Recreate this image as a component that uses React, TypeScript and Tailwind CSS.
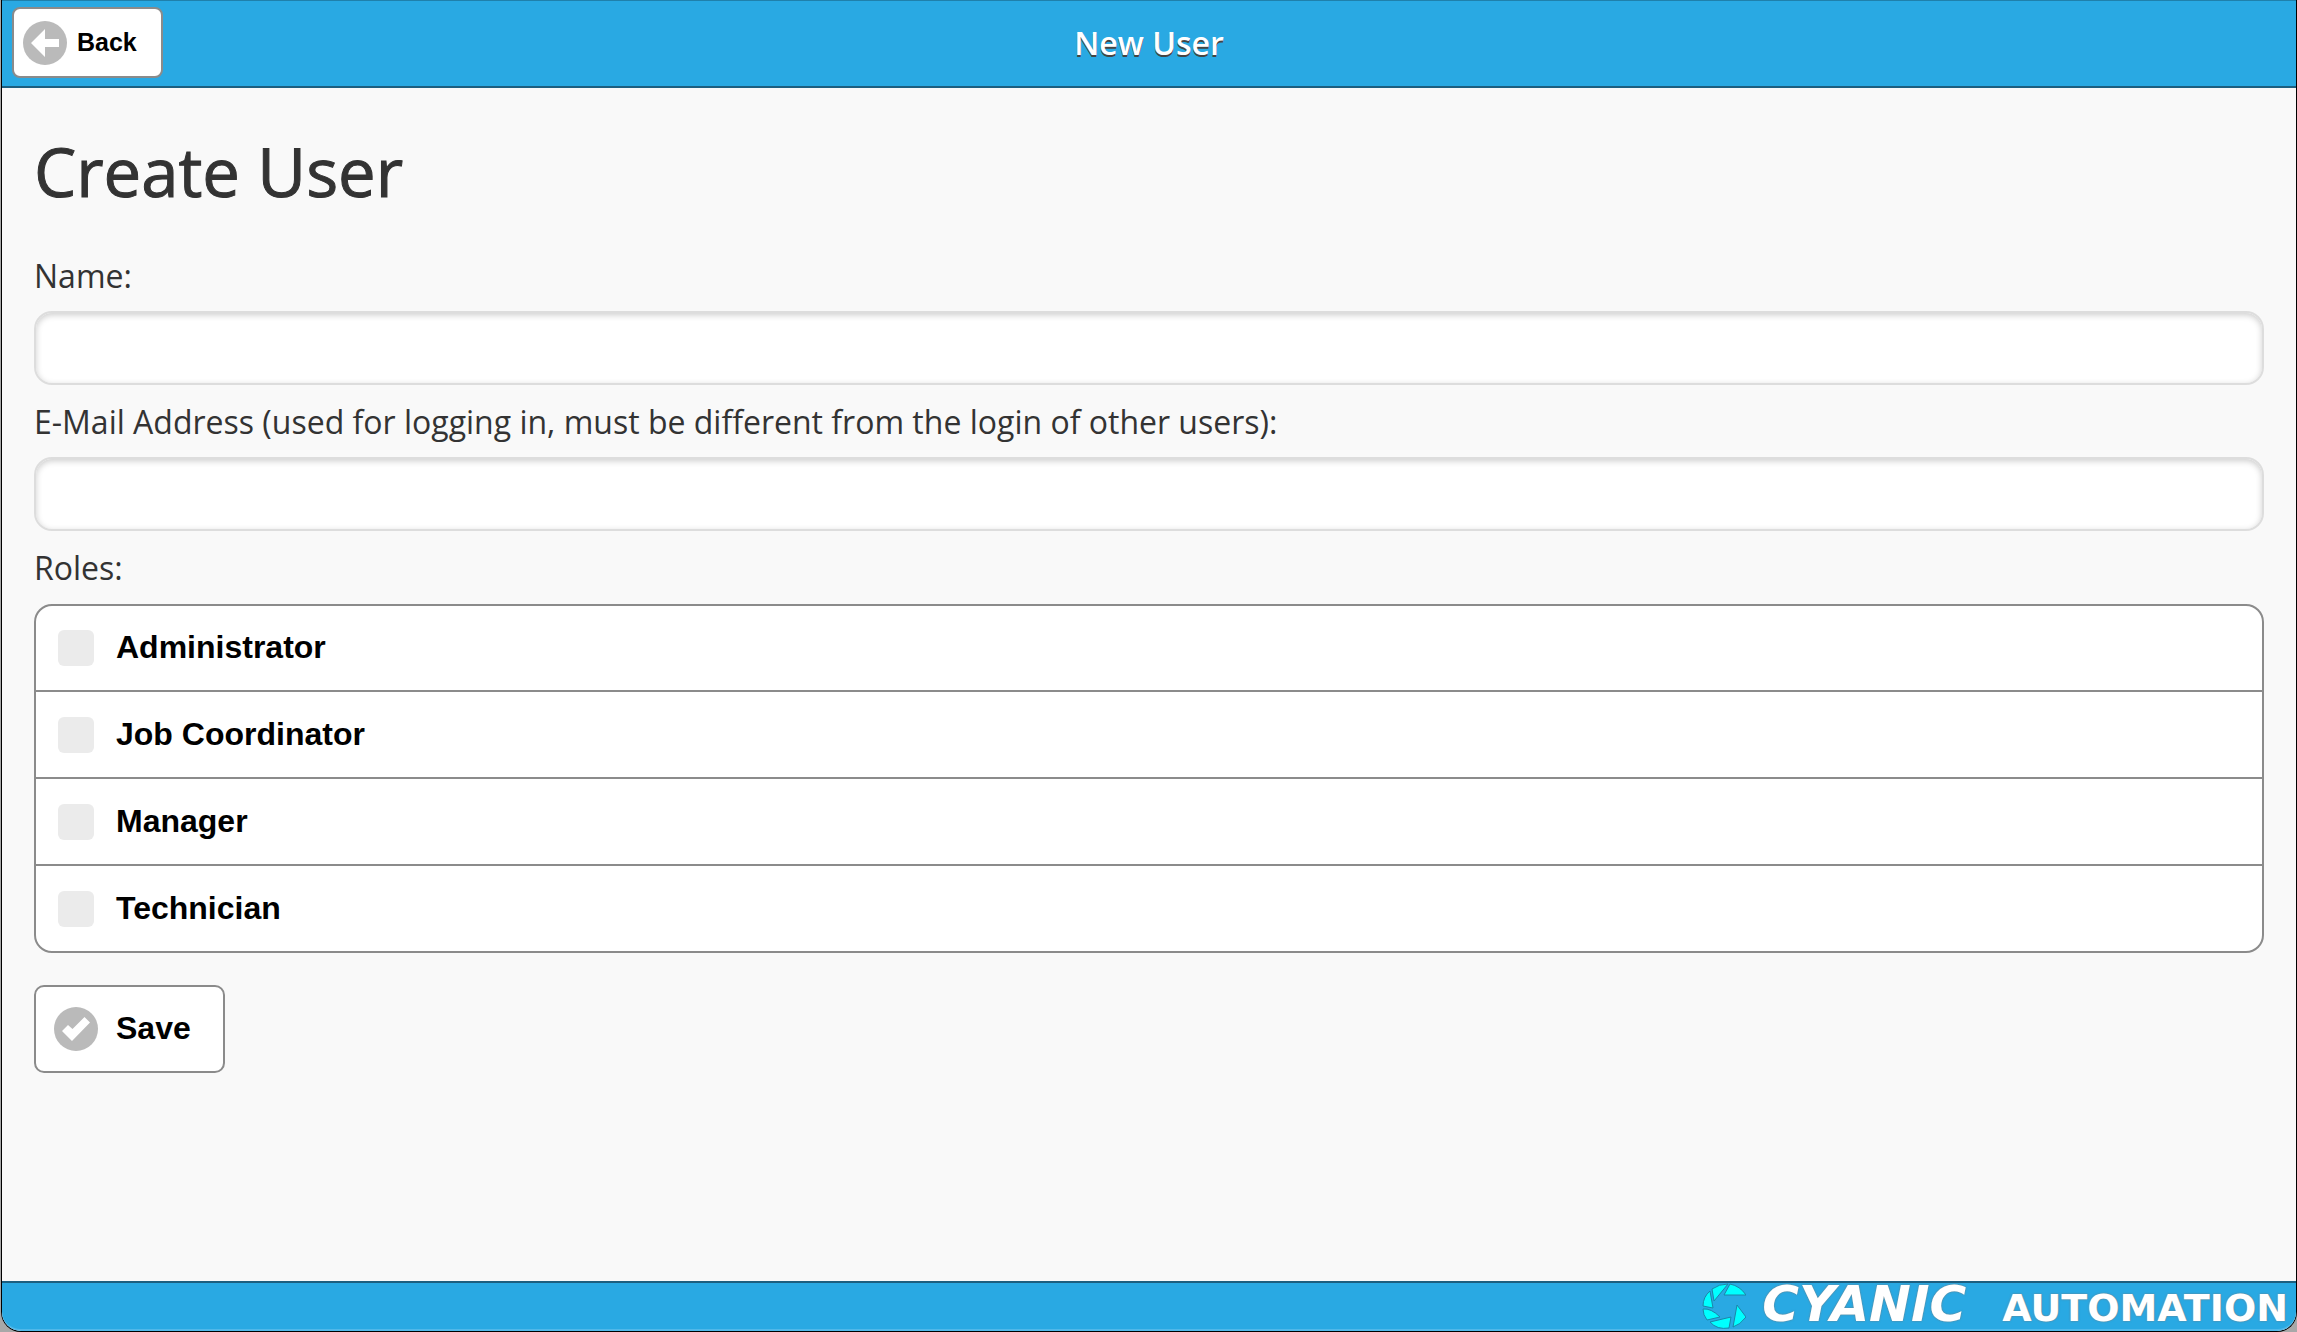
import React, { useState } from 'react';

const ROLES = [
  { id: 'administrator', label: 'Administrator' },
  { id: 'job-coordinator', label: 'Job Coordinator' },
  { id: 'manager', label: 'Manager' },
  { id: 'technician', label: 'Technician' },
];

const BackIcon = () => (
  <svg viewBox="0 0 44 44" className="w-11 h-11 shrink-0" aria-hidden="true">
    <circle cx="22" cy="22" r="22" fill="#bababa" />
    <path d="M8 22 L22 8 V18 H36 V26 H22 V36 Z" fill="#fff" />
  </svg>
);

const CheckIcon = () => (
  <svg viewBox="0 0 44 44" className="w-11 h-11 shrink-0" aria-hidden="true">
    <circle cx="22" cy="22" r="22" fill="#bababa" />
    <path d="M8 24 L14 18 L18.500 22 L30.500 10 L36 15.500 L18 34 Z" fill="#fff" />
  </svg>
);

const CyanicMark = () => (
  <svg viewBox="0 0 44 46" className="w-11 h-[46px] shrink-0" aria-hidden="true">
    <g fill="#00ffff" stroke="#1b86a8" strokeWidth="1">
      <path d="M10 6 Q17 1 26 1 L12 18 Z" />
      <path d="M28 1 Q38 3 44 12 L22 12 Z" />
      <path d="M8 8 L11 25 L1 23 Q1 14 8 8 Z" />
      <path d="M1 26 Q9 25 18 34 L5 37 Q1 32 1 26 Z" />
      <path d="M8 39 L29 34 L27 45 Q15 47 8 39 Z" />
      <path d="M35 22 L44 34 Q38 42 31 44 Z" />
    </g>
  </svg>
);

interface TextFieldProps {
  id: string;
  label: string;
  value: string;
  type?: string;
  onChange: (value: string) => void;
}

const TextField: React.FC<TextFieldProps> = ({ id, label, value, type = 'text', onChange }) => (
  <div className="flex flex-col gap-[14px]">
    <label htmlFor={id} className="text-[32px] leading-[42px]">{label}</label>
    <input
      id={id}
      type={type}
      value={value}
      onChange={(e) => onChange(e.target.value)}
      className="w-full h-[74px] px-4 text-[32px] bg-white border-2 border-[#dddddd] rounded-[18px] shadow-[inset_0_2px_6px_rgba(0,0,0,0.2)] outline-none"
    />
  </div>
);

const App: React.FC = () => {
  const [name, setName] = useState('');
  const [email, setEmail] = useState('');
  const [roles, setRoles] = useState<string[]>([]);

  const toggleRole = (id: string) => {
    setRoles((prev) => (prev.includes(id) ? prev.filter((r) => r !== id) : [...prev, id]));
  };

  return (
    <div className="bg-[#a8a8a8] pl-px">
      <div className="min-h-screen flex flex-col border-x border-b border-black rounded-b-[20px] bg-[#f9f9f9] text-[#333333] font-['Open_Sans','Noto_Sans',sans-serif]">
        <header className="grid grid-cols-[1fr_auto_1fr] items-center h-[88px] px-2.5 pb-0.5 bg-[#29a9e3] border-t border-t-[#1f80ab] border-b-2 border-b-[#1c5f80]">
          <button
            type="button"
            className="justify-self-start flex items-center gap-2.5 h-[71px] pl-[9px] pr-6 bg-white border-2 border-[#8b8b8b] rounded-lg text-black text-[25px] font-bold font-['Liberation_Sans',Arial,sans-serif]"
          >
            <BackIcon />
            Back
          </button>
          <h1 className="text-[32px] font-semibold text-white [text-shadow:0_2px_0_#444444]">New User</h1>
        </header>

        <main className="flex-1 flex flex-col px-8 pt-[38px]">
          <h2 className="text-[67px] leading-[90px] [-webkit-text-stroke:1px_#333333]">Create User</h2>

          <form className="flex flex-col gap-4 pt-[39px]" onSubmit={(e) => e.preventDefault()}>
            <TextField id="name" label="Name:" value={name} onChange={setName} />
            <TextField
              id="email"
              label="E-Mail Address (used for logging in, must be different from the login of other users):"
              type="email"
              value={email}
              onChange={setEmail}
            />

            <fieldset>
              <legend className="text-[32px] leading-[42px] pb-[15px]">Roles:</legend>
              <div className="bg-white border-2 border-[#8b8b8b] rounded-[18px] divide-y-2 divide-[#8b8b8b] font-['Liberation_Sans',Arial,sans-serif]">
                {ROLES.map((role) => (
                  <label
                    key={role.id}
                    htmlFor={role.id}
                    className="flex items-center gap-[22px] h-[87px] first:h-[86px] last:h-[85px] px-[22px] text-black text-[32px] font-bold"
                  >
                    <input
                      id={role.id}
                      type="checkbox"
                      checked={roles.includes(role.id)}
                      onChange={() => toggleRole(role.id)}
                      className="appearance-none w-9 h-9 shrink-0 rounded-md bg-[#ebebeb] checked:bg-[#29a9e3]"
                    />
                    <span className="pb-0.5">{role.label}</span>
                  </label>
                ))}
              </div>
            </fieldset>

            <button
              type="submit"
              className="self-start flex items-center gap-[18px] h-[88px] mt-4 pl-[18px] pr-8 bg-white border-2 border-[#8b8b8b] rounded-[10px] text-black text-[32px] font-bold font-['Liberation_Sans',Arial,sans-serif]"
            >
              <CheckIcon />
              <span className="pb-0.5">Save</span>
            </button>
          </form>
        </main>

        <footer className="flex items-center justify-end h-[50px] pr-2 bg-[#29a9e3] border-t-2 border-t-[#1c5f80] border-b-2 border-b-[#50b8e9] rounded-b-[19px] text-white font-bold font-['DejaVu_Sans',sans-serif] [text-shadow:0_0_2px_#777777]">
          <CyanicMark />
          <div className="flex items-baseline gap-9 pl-4 leading-[48px]">
            <span className="text-[50px] italic">CYANIC</span>
            <span className="text-[38px]">AUTOMATION</span>
          </div>
        </footer>
      </div>
    </div>
  );
};

export default App;
